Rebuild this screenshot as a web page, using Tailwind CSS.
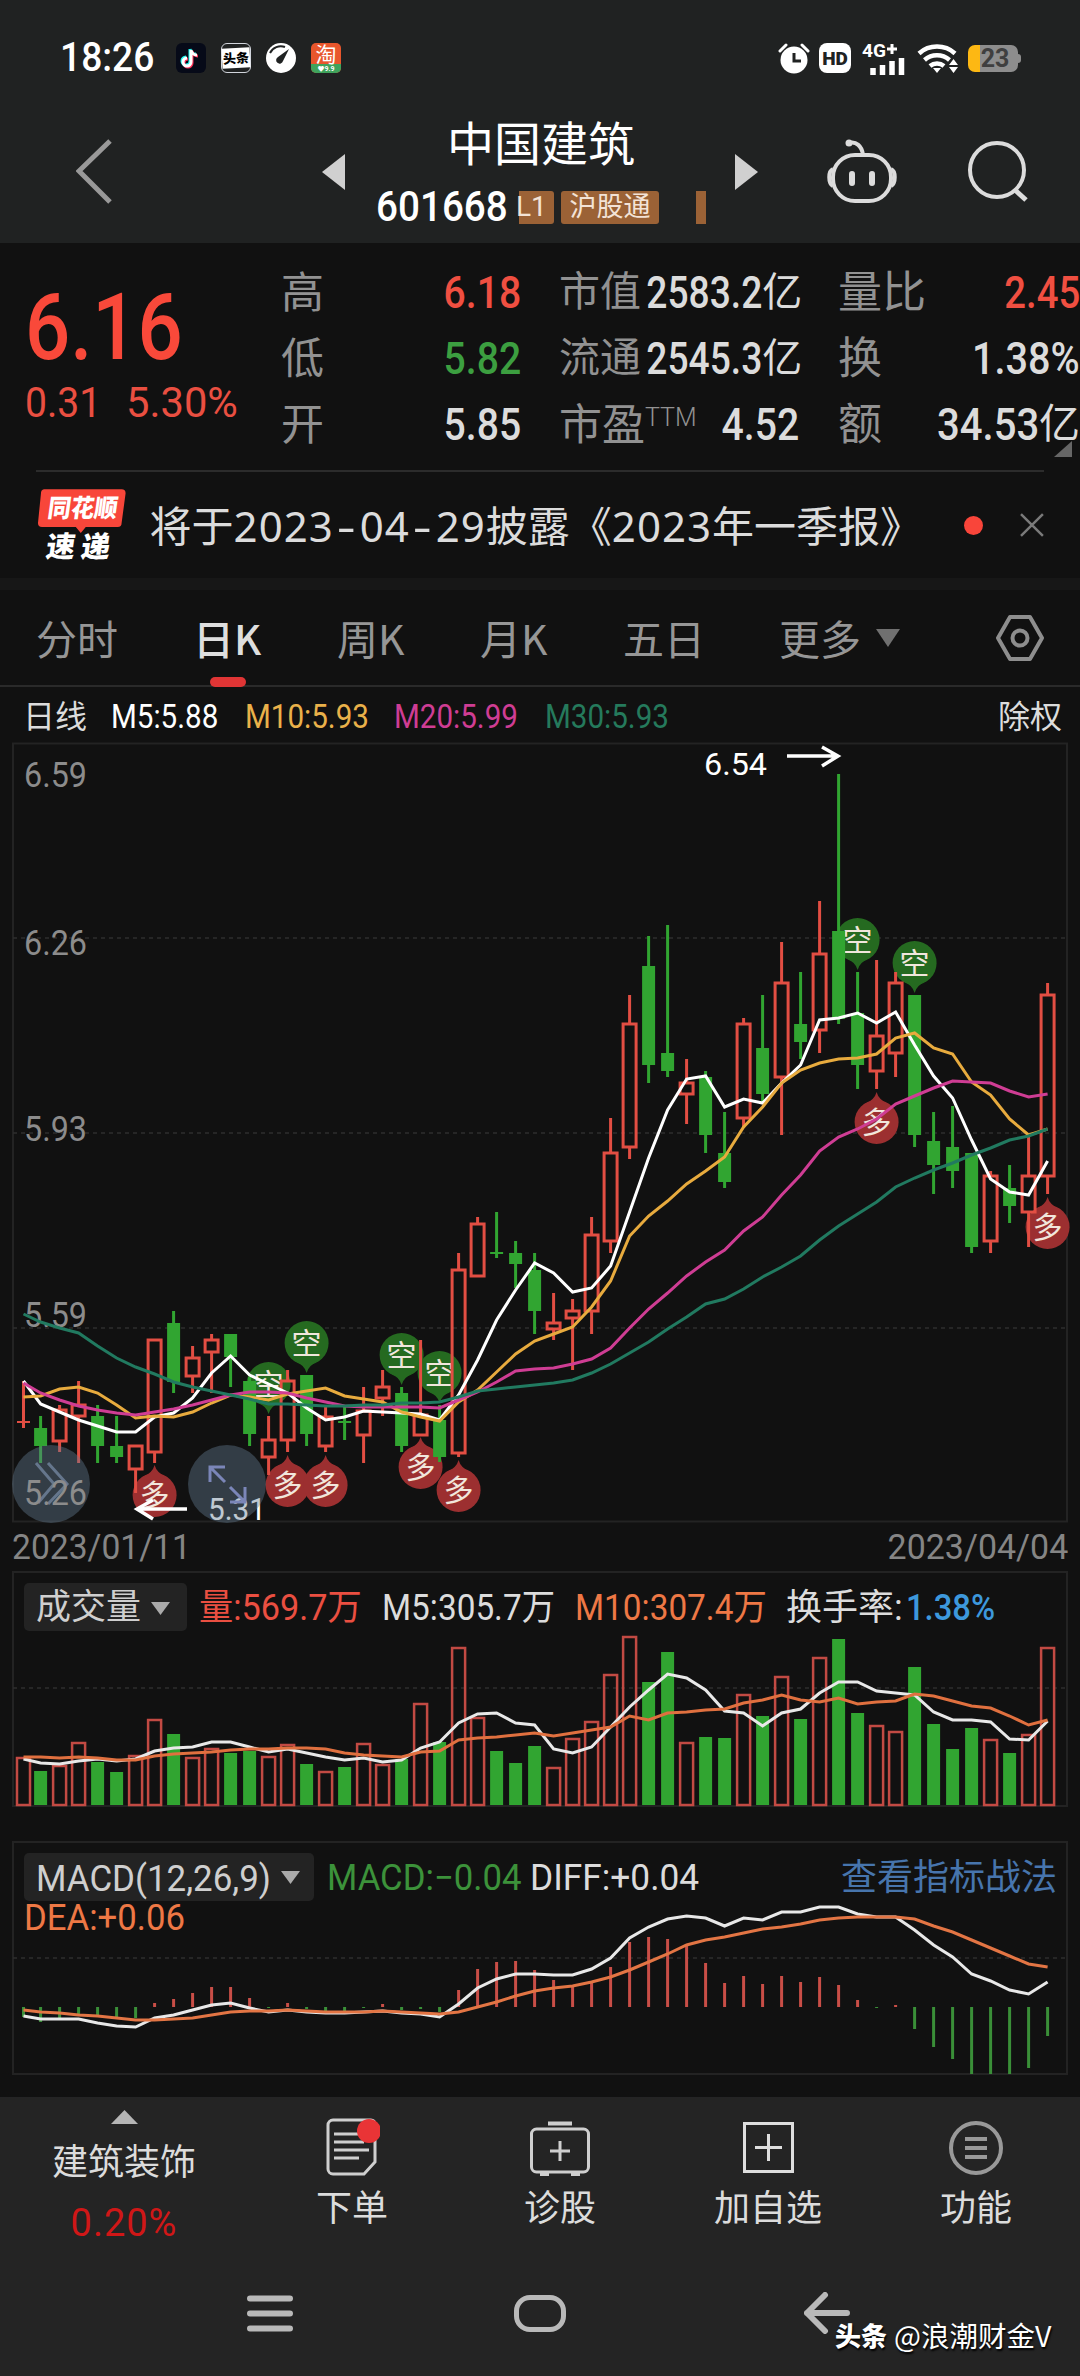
<!DOCTYPE html>
<html lang="zh-CN">
<head>
  <meta charset="UTF-8">
  <meta name="viewport" content="width=device-width, initial-scale=1.0">
  <title>中国建筑 601668</title>
  <script src="https://cdn.jsdelivr.net/npm/@tailwindcss/browser@4"></script>
</head>
<body class="w-[1080px] bg-[#111111] text-[#dcdcdc] [font-family:Roboto,'Noto_Sans_CJK_SC',sans-serif] whitespace-nowrap overflow-x-hidden">

  <!-- Status bar + title -->
  <header class="h-[243px] bg-[#202222]">
    <div class="flex h-[116px] items-center justify-between pl-[60px] pr-[59px] text-white">
      <div class="flex items-center gap-[15px]">
        <span class="w-[101px] origin-left scale-x-[0.93] text-[40px] font-medium leading-none">18:26</span>
        <svg class="size-[30px]" viewBox="0 0 30 30">
          <rect width="30" height="30" rx="6" fill="#060a18"/>
          <g fill="none" stroke-width="3">
            <path d="M15 7v12a4 4 0 1 1-4-4M15 7c1 4 3 5 6 5" stroke="#25f4ee" transform="translate(-1 -1)"/>
            <path d="M15 7v12a4 4 0 1 1-4-4M15 7c1 4 3 5 6 5" stroke="#fe2c55" transform="translate(1 1)"/>
            <path d="M15 7v12a4 4 0 1 1-4-4M15 7c1 4 3 5 6 5" stroke="#fff"/>
          </g>
        </svg>
        <div class="flex size-[30px] flex-col justify-center rounded-[6px] border border-gray-300 bg-[#202222]">
          <div class="flex h-[20px] -rotate-3 items-center justify-center bg-white text-[13px] font-black leading-none text-black">头条</div>
        </div>
        <svg class="size-[30px]" viewBox="0 0 30 30">
          <circle cx="15" cy="15" r="15" fill="#fff"/>
          <path d="M4 10A12 12 0 0 1 19 4" fill="none" stroke="#202222" stroke-width="2"/>
          <path d="M23 6 17 18a3.5 3.5 0 1 1-5-4z" fill="#202222"/>
        </svg>
        <svg class="size-[30px]" viewBox="0 0 30 30">
          <rect width="30" height="30" rx="5" fill="#e8562c"/>
          <path d="M0 21h30v4a5 5 0 0 1-5 5H5a5 5 0 0 1-5-5z" fill="#3fa35c"/>
          <text x="15" y="19" font-size="21" text-anchor="middle" fill="#fff">淘</text>
          <text x="15" y="28" font-size="7" font-weight="700" text-anchor="middle" fill="#fff">♥9.9</text>
        </svg>
      </div>
      <div class="flex items-center gap-[9px]">
        <svg class="h-[31px] w-[32px]" viewBox="0 0 32 31">
          <circle cx="16" cy="17" r="13.5" fill="#fff"/>
          <path d="M2 8 8 2M30 8l-6-6" stroke="#fff" stroke-width="3" stroke-linecap="round"/>
          <path d="M16 10v8h7" fill="none" stroke="#202222" stroke-width="3"/>
        </svg>
        <div class="flex h-[30px] w-[32px] items-center justify-center rounded-[8px] bg-white text-[19px] font-black leading-none text-[#202222]">HD</div>
        <svg class="h-[36px] w-[48px]" viewBox="0 -4 48 36">
          <text x="2" y="13" font-size="19" font-weight="700" fill="#fff" textLength="24" lengthAdjust="spacingAndGlyphs">4G</text>
          <path d="M27 5h10M32 0v10" stroke="#fff" stroke-width="3"/>
          <path d="M13 31v-7M22.500 31v-10M32 31V17M41.500 31V14" stroke="#fff" stroke-width="5.500" stroke-linecap="butt"/>
        </svg>
        <svg class="h-[32px] w-[42px]" viewBox="0 0 42 32">
          <g fill="none" stroke="#fff" stroke-width="4.500">
            <path d="M2 11.500a27 27 0 0 1 36 0"/>
            <path d="M7.500 18a19 19 0 0 1 25 0"/>
            <path d="M13 24a11 11 0 0 1 14 0"/>
          </g>
          <path d="M16 26h8l-4 5zM32 23h9l-4.500-6zM32 25h9l-4.500 6z" fill="#fff"/>
        </svg>
        <div class="flex items-center">
          <div class="flex h-[27px] w-[50px] items-center justify-center rounded-[7px] bg-linear-to-r from-[#fdb813] from-25% to-[#8d8d8d] to-25% text-[25px] font-bold leading-none text-[#3f3f3f]"><span class="pl-1">23</span></div>
          <div class="h-[9px] w-[3px] rounded-r bg-[#8d8d8d]"></div>
        </div>
      </div>
    </div>

    <div class="flex h-[112px] items-center">
      <svg class="ml-[76px] h-[66px] w-[36px]" viewBox="0 0 36 66"><path d="M34 2 3 32l31 31" fill="none" stroke="#999" stroke-width="5"/></svg>
      <svg class="ml-[210px] h-[36px] w-[23px]" viewBox="0 0 23 36"><path d="M23 0v36L0 18z" fill="#d0d0d0"/></svg>
      <div class="ml-[31px] h-full w-[329px]">
        <h1 class="ml-[71px] h-[66px] text-[47px] leading-[57px] text-white">中国建筑</h1>
        <div class="flex h-[50px] items-center">
          <span class="w-[143px] origin-left scale-x-[0.92] text-[42px] font-medium leading-none text-white">601668</span>
          <span class="flex h-[33px] w-[35px] shrink-0 items-center rounded-r-[3px] bg-[#9b6236] text-[28px] text-[#f3e3d6]"><span class="-ml-[3px]">L1</span></span>
          <span class="ml-[7px] flex h-[33px] w-[98px] shrink-0 items-center justify-center rounded-[3px] bg-[#9b6236] text-[27px] text-[#f3e3d6]">沪股通</span>
          <span class="ml-[37px] h-[33px] w-[10px] shrink-0 bg-[#9b6236]"></span>
        </div>
      </div>
      <svg class="ml-[30px] h-[36px] w-[23px]" viewBox="0 0 23 36"><path d="M0 0v36l23-18z" fill="#d0d0d0"/></svg>
      <svg class="ml-[69px] h-[66px] w-[70px]" viewBox="0 1 70 66" fill="none" stroke="#dcdcdc" stroke-width="4">
        <path d="M22 5c7-2 13 3 14 12" stroke-width="4"/>
        <circle cx="22" cy="5" r="3.500" fill="#dcdcdc" stroke="none"/>
        <rect x="6" y="17" width="58" height="46" rx="22"/>
        <path d="M6 31c-5 2-5 14 0 17M64 31c5 2 5 14 0 17"/>
        <path d="M25 36v9M45 36v9" stroke-width="6" stroke-linecap="round"/>
      </svg>
      <svg class="ml-[70px] h-[64px] w-[62px]" viewBox="0 0 62 64" fill="none" stroke="#dcdcdc" stroke-width="4">
        <circle cx="30" cy="30" r="27"/><path d="m48 50 11 10" stroke-width="5"/>
      </svg>
    </div>
  </header>

  <!-- Quote -->
  <section class="relative flex h-[227px] pt-[17px]">
    <div class="w-[281px] pl-[25px] text-[#f9493a]">
      <div class="mt-[15px] origin-left scale-x-[0.855] text-[93px] font-medium leading-[106px]">6.16</div>
      <div class="flex text-[43px] leading-[43px] text-[#ea4f41]"><span class="w-[101px] origin-left scale-x-[0.91]">0.31</span><span class="origin-left scale-x-[0.97]">5.30%</span></div>
    </div>
    <div class="w-[240px] text-[44px] font-medium">
      <div class="flex h-[66px] items-center justify-between text-[#f04f41]"><span class="text-[43px] font-normal text-[#929292]">高</span><span class="origin-right scale-x-[0.89]">6.18</span></div>
      <div class="flex h-[66px] items-center justify-between text-[#3c9f40]"><span class="text-[43px] font-normal text-[#929292]">低</span><span class="origin-right scale-x-[0.89]">5.82</span></div>
      <div class="flex h-[66px] items-center justify-between"><span class="text-[43px] font-normal text-[#929292]">开</span><span class="origin-right scale-x-[0.89]">5.85</span></div>
    </div>
    <div class="ml-[38px] w-[240px] text-[44px] font-medium">
      <div class="flex h-[66px] items-center justify-between"><span class="text-[41px] font-normal text-[#929292]">市值</span><span class="flex items-center"><span class="-ml-4 origin-right scale-x-[0.845]">2583.2</span><span class="text-[40px] font-normal">亿</span></span></div>
      <div class="flex h-[66px] items-center justify-between"><span class="text-[41px] font-normal text-[#929292]">流通</span><span class="flex items-center"><span class="-ml-4 origin-right scale-x-[0.845]">2545.3</span><span class="text-[40px] font-normal">亿</span></span></div>
      <div class="flex h-[66px] items-center justify-between"><span class="flex text-[43px] font-normal text-[#929292]">市盈<span class="pt-[12px] text-[25px] font-light leading-none">TTM</span></span><span class="origin-right scale-x-[0.89]">4.52</span></div>
    </div>
    <div class="ml-[39px] w-[242px] text-[44px] font-medium">
      <div class="flex h-[66px] items-center justify-between text-[#f04f41]"><span class="text-[44px] font-normal text-[#929292]">量比</span><span class="origin-right scale-x-[0.87]">2.45</span></div>
      <div class="flex h-[66px] items-center justify-between"><span class="text-[44px] font-normal text-[#929292]">换</span><span class="origin-right scale-x-[0.9]">1.38%</span></div>
      <div class="flex h-[66px] items-center justify-between"><span class="text-[44px] font-normal text-[#929292]">额</span><span class="flex items-center"><span class="origin-right scale-x-[0.91]">34.53</span><span class="text-[41px] font-normal">亿</span></span></div>
    </div>
    <svg class="absolute right-[8px] top-[198px] h-[16px] w-[18px]" viewBox="0 0 18 16"><path d="M18 0v16H0z" fill="#666"/></svg>
  </section>

  <!-- News -->
  <section class="mx-[36px] flex h-[108px] items-center border-t-2 border-[#2c2c2c]">
    <svg class="h-[76px] w-[92px]" viewBox="0 0 92 76">
      <path d="M8 2h78a4 4 0 0 1 4 4l-4 30a4 4 0 0 1-4 4H50l-5 6-5-6H6a4 4 0 0 1-4-4L5 6a4 4 0 0 1 3-4z" fill="#f8463a"/>
      <g font-weight="900" fill="#fff" transform="skewX(-8)">
        <text x="15" y="30" font-size="25" textLength="70" lengthAdjust="spacingAndGlyphs">同花顺</text>
        <text x="19" y="70" font-size="29" textLength="64">速递</text>
      </g>
    </svg>
    <div class="ml-[22px] w-[780px] pb-[2px] text-[42px] [font-family:'Noto_Sans_CJK_SC',sans-serif]">将于<span class="tracking-[1px] [font-family:'Noto_Sans',sans-serif]">2023<span class="inline-block w-[26px] scale-x-[1.4] text-center">-</span>04<span class="inline-block w-[26px] scale-x-[1.4] text-center">-</span>29</span>披露《<span class="tracking-[1px] [font-family:'Noto_Sans',sans-serif]">2023</span>年一季报》</div>
    <div class="ml-[38px] size-[19px] rounded-full bg-[#f9453a]"></div>
    <svg class="ml-[37px] size-[24px]" viewBox="0 0 24 24"><path d="m1 1 22 22M23 1 1 23" stroke="#7a7a7a" stroke-width="2.500"/></svg>
  </section>
  <div class="h-[12px] bg-[#171717]"></div>

  <!-- Period tabs -->
  <nav class="relative flex h-[97px] items-center border-b-2 border-[#2a2a2a] text-[41px] text-[#969696] [font-family:'Noto_Sans_CJK_SC',sans-serif]">
    <span class="ml-[36px] w-[157px]">分时</span>
    <span class="w-[144px] font-medium text-[#dedede]">日K</span>
    <span class="w-[143px]">周K</span>
    <span class="w-[143px]">月K</span>
    <span class="w-[156px]">五日</span>
    <span class="w-[97px]">更多</span>
    <svg class="h-[18px] w-[24px]" viewBox="0 0 24 18"><path d="M0 0h24L12 18z" fill="#707070"/></svg>
    <svg class="ml-[96px] h-[46px] w-[48px]" viewBox="0 0 48 46" fill="none" stroke="#8e8e8e" stroke-width="4" stroke-linejoin="round">
      <path d="M14 2h20l12 21-12 21H14L2 23z"/><circle cx="24" cy="23" r="7.500"/>
    </svg>
    <div class="absolute bottom-[-2px] left-[210px] h-[10px] w-[36px] rounded-[5px] bg-[#e03535]"></div>
  </nav>

  <!-- MA legend -->
  <div class="flex h-[55px] items-center pl-[23px] pr-[18px] pt-[4px] text-[34px]">
    <span class="w-[88px] text-[32px]">日线</span>
    <span class="w-[134px] origin-left scale-x-[0.87] text-white">M5:5.88</span>
    <span class="w-[149px] origin-left scale-x-[0.87] text-[#eab14a]">M10:5.93</span>
    <span class="w-[151px] origin-left scale-x-[0.87] text-[#cf3d94]">M20:5.99</span>
    <span class="origin-left scale-x-[0.87] text-[#257a5c]">M30:5.93</span>
    <span class="ml-auto text-[32px]">除权</span>
  </div>

  <!-- Candles -->
  <svg id="kline" class="block h-[781px] w-[1080px]" viewBox="0 742 1080 781"></svg>
  <div class="flex h-[48px] items-center justify-between px-[12px] pt-[3px] text-[35px] text-[#858585]"><span class="origin-left scale-x-[0.96]">2023/01/11</span><span class="origin-right scale-x-[0.97]">2023/04/04</span></div>

  <!-- Volume -->
  <section class="relative mx-[12px] h-[236px] border-2 border-[#232323]">
    <svg id="volume" class="absolute left-[-14px] top-[-2px] h-[236px] w-[1080px]" viewBox="0 1571 1080 236"></svg>
    <div class="relative mt-[10px] flex h-[48px] items-center text-[36px]">
      <div class="ml-[10px] mr-[12px] flex h-[48px] w-[163px] items-center gap-[10px] rounded-[5px] bg-[#232323] pl-[12px] pt-[2px] text-[35px] text-[#cfcfcf]">成交量
        <svg class="h-[13px] w-[19px]" viewBox="0 0 19 13"><path d="M0 0h19l-9.500 13z" fill="#aaa"/></svg>
      </div>
      <span class="w-[183px] origin-left scale-x-[0.95] pt-[2px] text-[#ea4f41]">量:569.7万</span>
      <span class="w-[193px] origin-left scale-x-[0.926] pt-[2px]">M5:305.7万</span>
      <span class="w-[211px] origin-left scale-x-[0.926] pt-[2px] text-[#ee7845]">M10:307.4万</span>
      <span class="w-[120px] pt-[2px]">换手率:</span>
      <span class="origin-left scale-x-[0.91] pt-[2px] font-medium text-[#3d98dc]">1.38%</span>
    </div>
  </section>

  <!-- MACD -->
  <section class="relative mx-[12px] mt-[34px] h-[234px] border-2 border-[#232323]">
    <svg id="macd" class="absolute left-[-14px] top-[-2px] h-[234px] w-[1080px]" viewBox="0 1841 1080 234"></svg>
    <div class="relative mt-[10px] flex h-[48px] items-center text-[36px]">
      <div class="ml-[10px] mr-[13px] flex h-[48px] w-[290px] items-center rounded-[5px] bg-[#232323] pl-[12px] text-[#cfcfcf]">
        <span class="w-[245px] origin-left scale-x-[0.97] pt-[3px]">MACD(12,26,9)</span>
        <svg class="h-[13px] w-[19px]" viewBox="0 0 19 13"><path d="M0 0h19l-9.500 13z" fill="#aaa"/></svg>
      </div>
      <span class="w-[203px] origin-left scale-x-[0.965] pt-[2px] text-[#3c923a]">MACD:−0.04</span>
      <span class="origin-left scale-x-[0.98] pt-[2px]">DIFF:+0.04</span>
      <span class="ml-auto mr-[9px] pt-[2px] text-[36px] text-[#4775ad]">查看指标战法</span>
    </div>
    <div class="relative ml-[10px] origin-left scale-x-[0.965] pt-px text-[36px] leading-[32px] text-[#ee7845]">DEA:+0.06</div>
  </section>

  <!-- Bottom toolbar -->
  <footer class="mt-[22px] h-[279px] bg-[#242424] text-[36px]">
    <div class="flex h-[163px]">
      <div class="flex w-[248px] flex-col items-center pt-[13px]">
        <svg class="h-[14px] w-[27px]" viewBox="0 0 27 14"><path d="M13.500 0 27 14H0z" fill="#b5b5b5"/></svg>
        <span class="mt-[17px] h-[44px] leading-[44px]">建筑装饰</span>
        <span class="mt-[16px] text-[38px] leading-[44px] tracking-[1px] text-[#d01717]">0.20%</span>
      </div>
      <div class="flex w-[208px] flex-col items-center pt-[20px]">
        <svg class="h-[60px] w-[56px]" viewBox="0 0 56 60" fill="none" stroke="#cfcfcf" stroke-width="3">
          <path d="M9 3h38a4 4 0 0 1 4 4v38L40 57H9a5 5 0 0 1-5-5V8a5 5 0 0 1 5-5z"/>
          <path d="M10 17h25M10 25h30M10 33h35M10 41h25"/>
          <circle cx="45" cy="14" r="12" fill="#e93436" stroke="none"/>
        </svg>
        <span class="mt-[10px] leading-[44px]">下单</span>
      </div>
      <div class="flex w-[208px] flex-col items-center pt-[20px]">
        <svg class="h-[60px] w-[62px]" viewBox="0 0 62 60" fill="none" stroke="#cfcfcf" stroke-width="3">
          <path d="M19 6.500h24M11 57h9M42 57h9" stroke-width="4"/>
          <rect x="2.500" y="12" width="57" height="43" rx="5"/>
          <path d="M31 24v20M21 34h20"/>
        </svg>
        <span class="mt-[10px] leading-[44px]">诊股</span>
      </div>
      <div class="flex w-[208px] flex-col items-center pt-[20px]">
        <svg class="h-[60px] w-[56px]" viewBox="0 0 56 60" fill="none" stroke="#dedede" stroke-width="3">
          <path d="M4.500 6.500h48v48h-48zM28.500 17v27M15 30.500h27"/>
        </svg>
        <span class="mt-[10px] leading-[44px]">加自选</span>
      </div>
      <div class="flex w-[208px] flex-col items-center pt-[20px]">
        <svg class="h-[60px] w-[56px]" viewBox="0 0 56 60" fill="none" stroke="#999" stroke-width="4">
          <circle cx="28" cy="31" r="25"/><path d="M17 22h22M17 31h22M17 40h22"/>
        </svg>
        <span class="mt-[10px] leading-[44px]">功能</span>
      </div>
    </div>
    <div class="relative flex h-[106px] items-center pl-[247px]">
      <svg class="h-[37px] w-[46px]" viewBox="0 0 46 37"><path d="M3 3.500h40M3 18.500h40M3 33.500h40" stroke="#b9b9b9" stroke-width="6" stroke-linecap="round"/></svg>
      <div class="ml-[221px] h-[37px] w-[52px] rounded-[16px] border-[5px] border-[#b9b9b9]"></div>
      <svg class="ml-[238px] h-[42px] w-[46px]" viewBox="0 0 46 42"><path d="M21 3 3 21l18 18M3 21h40" fill="none" stroke="#b9b9b9" stroke-width="6" stroke-linecap="round" stroke-linejoin="round"/></svg>
      <div class="absolute left-[835px] top-[55px] flex items-center gap-[7px] text-[28.500px] leading-[40px] text-white [text-shadow:1px_2px_2px_#000] [font-family:'Noto_Sans_CJK_SC',sans-serif]"><b class="text-[26px] font-black">头条</b><span>@浪潮财金V</span></div>
    </div>
  </footer>

  <script>
    const RED = '#e24e43', GREEN = '#31a531';
    const step = 19;
    const cx = i => i === 0 ? 23.5 : 21.6 + i * step;

    // [up, high, bodyTop, bodyBottom, low]
    const candles = [
      [1,1381,1421,1423,1428],[0,1416,1428,1446,1463],[1,1405,1409,1442,1452],[1,1381,1404,1417,1463],[0,1405,1416,1446,1463],
      [0,1416,1446,1457,1463],[1,1445,1445,1470,1493],[1,1339,1339,1453,1463],[0,1311,1323,1382,1393],[1,1346,1357,1377,1393],
      [1,1334,1339,1353,1393],[0,1334,1334,1357,1387],[0,1377,1381,1434,1446],[1,1416,1439,1458,1475],[1,1370,1380,1441,1452],
      [0,1375,1375,1434,1446],[1,1405,1416,1447,1452],[0,1407,1421,1423,1440],[1,1387,1410,1436,1463],[1,1370,1386,1399,1416],
      [0,1387,1393,1446,1452],[1,1340,1414,1436,1436],[0,1405,1420,1457,1462],[1,1253,1269,1454,1457],[1,1217,1223,1277,1277],
      [0,1212,1252,1254,1258],[0,1241,1253,1264,1288],[0,1253,1270,1311,1334],[1,1293,1322,1330,1340],[1,1299,1310,1319,1370],
      [1,1217,1234,1312,1334],[1,1118,1152,1242,1253],[1,995,1023,1148,1159],[0,936,966,1065,1083],[0,925,1053,1071,1077],
      [1,1059,1082,1095,1124],[0,1071,1077,1135,1153],[0,1112,1153,1182,1188],[1,1018,1023,1119,1128],[0,995,1048,1094,1102],
      [1,942,982,1078,1135],[0,972,1024,1042,1059],[1,901,953,1031,1053],[0,774,931,1019,1024],[0,972,1013,1065,1089],
      [1,960,1035,1072,1089],[1,972,982,1054,1077],[0,995,995,1135,1147],[0,1112,1141,1165,1194],[0,1106,1147,1171,1188],
      [0,1153,1153,1247,1253],[1,1171,1175,1242,1253],[0,1165,1188,1206,1223],[1,1135,1175,1213,1247],[1,983,994,1177,1194]
    ];
    const ma5 = [1381,1404,1412,1420,1426,1432,1432,1417,1413,1398,1373,1356,1375,1384,1393,1408,1420,1417,1411,1412,1413,1414,1420,1395,1360,1320,1290,1263,1273,1292,1288,1266,1212,1158,1110,1079,1076,1107,1099,1103,1083,1065,1020,1018,1013,1023,1012,1045,1076,1098,1140,1179,1192,1195,1161];
    const ma10 = [1397,1396,1389,1387,1393,1405,1418,1416,1417,1412,1403,1395,1397,1400,1394,1391,1388,1396,1399,1402,1412,1417,1421,1402,1390,1372,1354,1341,1334,1327,1307,1281,1236,1216,1201,1184,1171,1157,1127,1107,1083,1070,1063,1059,1058,1054,1038,1033,1048,1054,1082,1095,1119,1135,1129];
    const ma20 = [1383,1393,1400,1406,1410,1413,1415,1412,1409,1405,1400,1395,1392,1392,1393,1398,1402,1406,1407,1407,1407,1407,1408,1400,1392,1382,1371,1369,1368,1364,1359,1348,1328,1309,1293,1276,1262,1250,1231,1217,1195,1175,1151,1137,1129,1119,1104,1096,1088,1081,1082,1083,1091,1097,1094];
    const ma30 = [1314,1322,1328,1333,1346,1358,1367,1374,1382,1387,1391,1395,1399,1404,1404,1405,1406,1406,1405,1405,1403,1403,1402,1397,1391,1389,1387,1385,1383,1380,1373,1364,1353,1342,1329,1317,1304,1299,1289,1277,1267,1256,1240,1226,1214,1202,1187,1178,1170,1163,1155,1148,1140,1136,1129];

    const vol = [1757,1771,1765,1742,1762,1772,1755,1719,1734,1757,1748,1753,1751,1756,1744,1764,1771,1767,1743,1764,1759,1703,1742,1647,1717,1751,1763,1746,1767,1738,1721,1674,1636,1682,1652,1742,1737,1738,1694,1716,1676,1719,1657,1639,1713,1725,1731,1667,1724,1749,1728,1739,1753,1734,1647];
    const vol5 = [1759,1763,1764,1761,1759,1761,1759,1751,1748,1747,1742,1742,1747,1752,1749,1753,1757,1760,1758,1762,1760,1748,1742,1723,1714,1713,1723,1725,1749,1753,1747,1727,1707,1690,1674,1678,1690,1711,1713,1726,1713,1709,1693,1682,1682,1691,1693,1695,1712,1720,1720,1722,1739,1740,1721];
    const vol10 = [1757,1757,1758,1757,1758,1760,1760,1756,1754,1753,1752,1750,1749,1749,1748,1748,1749,1753,1755,1756,1757,1752,1751,1740,1738,1737,1735,1733,1736,1733,1730,1727,1716,1720,1713,1712,1710,1709,1703,1700,1695,1700,1702,1698,1704,1702,1701,1694,1696,1701,1706,1708,1716,1725,1720];

    const bars = [2017,2022,2020,2014,2016,2018,2018,2003,1999,1993,1987,1987,1998,2008,2003,2009,2011,2012,2008,2004,2010,2009,2012,1990,1969,1962,1961,1970,1980,1986,1982,1967,1942,1937,1939,1945,1963,1983,1976,1984,1976,1982,1977,1985,2000,2008,2005,2029,2047,2059,2074,2074,2074,2068,2036];
    const diff = [2016,2019,2019,2019,2023,2026,2027,2018,2015,2010,2005,2003,2008,2012,2010,2012,2013,2013,2012,2011,2013,2014,2017,2004,1988,1979,1974,1974,1975,1975,1969,1958,1938,1927,1919,1916,1918,1926,1918,1920,1912,1912,1907,1907,1914,1917,1917,1930,1945,1957,1974,1981,1990,1994,1982];
    const dea = [2010,2012,2013,2015,2016,2018,2020,2020,2019,2018,2015,2012,2011,2011,2010,2011,2012,2012,2012,2011,2012,2013,2014,2012,2007,2002,1996,1991,1988,1986,1982,1977,1970,1962,1954,1945,1940,1937,1933,1929,1927,1924,1920,1918,1917,1917,1917,1919,1926,1932,1940,1948,1956,1964,1967];

    // [candle index, centre y]
    const bears = [[13,1384],[15,1343],[20,1355],[22,1373],[44,940],[47,963]];
    const bulls = [[7,1495],[14,1485],[16,1485],[21,1467],[23,1490],[45,1122],[54,1227]];

    function line(ys, color) {
      const pts = ys.map((y, i) => `${cx(i).toFixed(1)},${y}`).join(' ');
      return `<polyline points="${pts}" fill="none" stroke="${color}" stroke-width="3"/>`;
    }

    function dash(y) {
      return `<path d="M13 ${y}H1067" stroke="#2e2e2e" stroke-width="1.5" stroke-dasharray="4 4"/>`;
    }

    function candle([up, high, top, bottom, low], i) {
      const x = cx(i), color = up ? RED : GREEN;
      let s = `<path d="M${x} ${high}V${top}M${x} ${bottom}V${low}" stroke="${color}" stroke-width="3"/>`;
      if (up && bottom - top > 3) {
        s += `<rect x="${x - 6.5}" y="${top + 1}" width="13" height="${bottom - top - 2}" fill="none" stroke="${color}" stroke-width="3"/>`;
      } else {
        s += `<rect x="${x - 6.5}" y="${top}" width="13" height="${bottom - top}" fill="${color}"/>`;
      }
      return s;
    }

    function pin([i, y], dir, color, text) {
      const x = cx(i);
      return `<g fill="${color}"><circle cx="${x}" cy="${y}" r="22"/><path d="M${x - 12} ${y + dir * 18}Q${x - 2} ${y + dir * 22} ${x} ${y + dir * 30}Q${x + 2} ${y + dir * 22} ${x + 12} ${y + dir * 18}z"/></g>
        <text x="${x}" y="${y + 11}" font-size="30" text-anchor="middle" fill="#f1e6dc">${text}</text>`;
    }

    function axis(y, text) {
      return `<text x="24" y="${y}" font-size="35" fill="#8c8c8c" textLength="63" lengthAdjust="spacingAndGlyphs">${text}</text>`;
    }

    document.getElementById('kline').innerHTML =
      '<rect x="13" y="743.5" width="1054" height="778" fill="none" stroke="#232323" stroke-width="2"/>' +
      dash(938) + dash(1133) + dash(1328) +
      bears.map(p => pin(p, 1, '#256a20', '空')).join('') +
      bulls.map(p => pin(p, -1, '#9c2f30', '多')).join('') +
      candles.map(candle).join('') +
      axis(787, '6.59') + axis(955, '6.26') + axis(1141, '5.93') + axis(1327, '5.59') +
      line(ma5, '#fff') + line(ma10, '#e8ab3e') + line(ma20, '#cf3d94') + line(ma30, '#217a60') +
      `<g fill="none" stroke="#fff" stroke-width="3.5"><path d="M787 756h51M822 747l16 9-16 10"/><path d="M187 1509h-50M153 1500l-16 9 16 10"/></g>
       <g fill="#fff"><text x="704" y="775" font-size="32" textLength="63" lengthAdjust="spacingAndGlyphs">6.54</text>
       <text x="208" y="1520" font-size="32" textLength="58" lengthAdjust="spacingAndGlyphs">5.31</text></g>
       <g fill="#647c92" fill-opacity=".41"><circle cx="51" cy="1484" r="39"/><circle cx="227" cy="1484" r="39"/></g>
       <path d="M36 1463l18 21-16 19M48 1463l19 21-19 20" fill="none" stroke="#65768c" stroke-width="3"/>
       <path d="M225 1467h-15v15M210 1467l15 15M230 1502h15v-15M245 1502l-15-15" fill="none" stroke="#7b86b8" stroke-width="3"/>` +
      axis(1505, '5.26');

    document.getElementById('volume').innerHTML = dash(1688) +
      vol.map((y, i) => candles[i][0]
        ? `<rect x="${cx(i) - 6.5}" y="${y + 1}" width="13" height="${1804 - y}" fill="none" stroke="#c24a43" stroke-width="2.5"/>`
        : `<rect x="${cx(i) - 6.5}" y="${y}" width="13" height="${1805 - y}" fill="${GREEN}"/>`).join('') +
      line(vol5, '#e8e8e8') + line(vol10, '#e0703f');

    document.getElementById('macd').innerHTML = dash(1958) +
      bars.map((y, i) => `<path d="M${cx(i)} 2007V${y}" stroke="${y < 2007 ? '#c94e47' : '#3a8f38'}" stroke-width="3"/>`).join('') +
      line(diff, '#e8e8e8') + line(dea, '#e37544');
  </script>
</body>
</html>
